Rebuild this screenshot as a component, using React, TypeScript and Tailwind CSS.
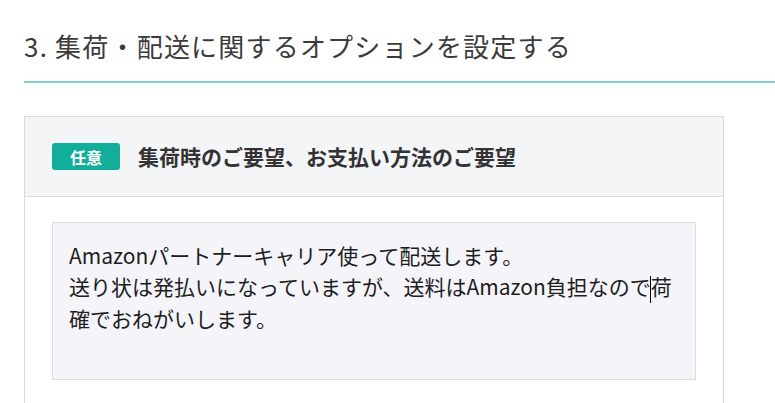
const font = { fontFamily: '"Noto Sans CJK JP", "Noto Sans", sans-serif' };

const lines = [
  "Amazonパートナーキャリア使って配送します。",
  "送り状は発払いになっていますが、送料はAmazon負担なので荷",
  "確でおねがいします。",
];

export default function App() {
  return (
    <div className="w-[775px] h-[403px] bg-white overflow-hidden" style={font}>
      <div className="ml-[24px] pt-[26px] pb-[15px] border-b-2 border-[#80d4ca]">
        <h1 className="text-[26px] leading-[40px] text-[#3b3b3b] tracking-[1.2px]">
          3. 集荷・配送に関するオプションを設定する
        </h1>
      </div>

      <div className="ml-[24px] mt-[33px] w-[700px] border border-[#d8dae0]">
        <div className="h-[80px] bg-[#f4f5f7] border-b border-[#d8dae0] flex items-center pl-[27px] gap-[18px]">
          <span className="w-[68px] h-[27px] rounded-[3px] bg-[#12ae9a] text-white text-[16px] font-bold flex items-center justify-center">
            任意
          </span>
          <h2 className="text-[21px] font-bold text-[#333]">集荷時のご要望、お支払い方法のご要望</h2>
        </div>

        <div className="pt-[25px] px-[27px] pb-[30px] bg-white">
          <div className="w-[644px] h-[158px] bg-[#f4f4f9] border border-[#dcdde3] px-[16px] pt-[17px] text-[21px] leading-[31px] text-[#1e1e1e]">
            <div>{lines[0]}</div>
            <div>
              送り状は発払いになっていますが、送料はAmazon負担なので
              <span className="inline-block w-px h-[27px] bg-black align-middle -mx-[0.5px]" />
              荷
            </div>
            <div>{lines[2]}</div>
          </div>
        </div>
      </div>
    </div>
  );
}
